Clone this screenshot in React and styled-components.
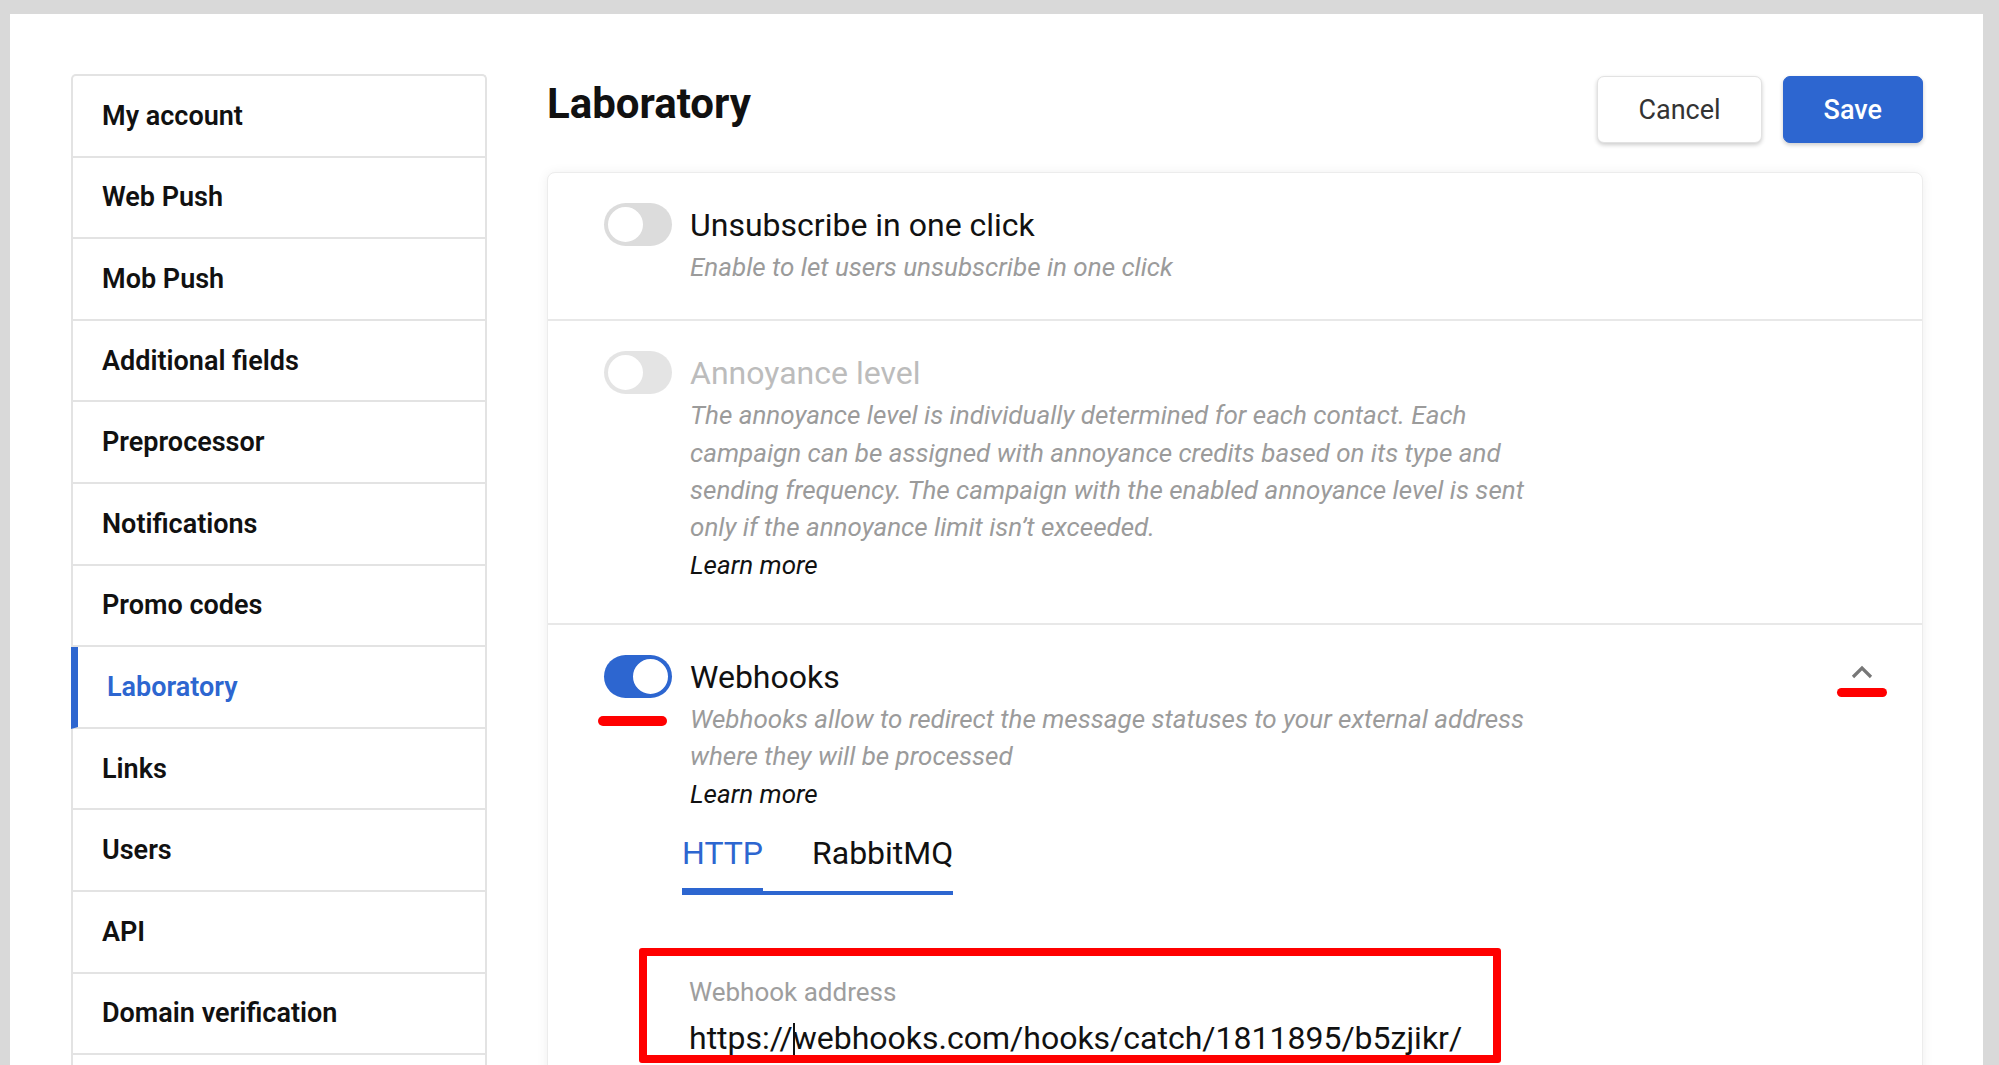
import styled, { createGlobalStyle } from "styled-components";

const GlobalStyle = createGlobalStyle`
    * {
        box-sizing: border-box;
    }
    body {
        margin: 0;
        background: #d9d9d9;
        font-family: Roboto, "Liberation Sans", Arial, sans-serif;
        color: #111;
        overflow: hidden;
    }
`

const menu = [
    'My account', 'Web Push', 'Mob Push', 'Additional fields', 'Preprocessor',
    'Notifications', 'Promo codes', 'Laboratory', 'Links', 'Users', 'API',
    'Domain verification', 'Billing'
]

function Toggle({ on, disabled }) {
    return (
        <Track on={on} disabled={disabled}>
            <Knob on={on} />
        </Track>
    )
}

function Chevron() {
    return (
        <svg width="22" height="14" viewBox="0 0 22 14">
            <polyline points="2,12 11,3 20,12" fill="none" stroke="#777" strokeWidth="3.2" />
        </svg>
    )
}

export default function App() {
    return (
        <>
            <GlobalStyle />
            <Page>
                <Sidebar>
                    {menu.map(item => (
                        <MenuItem key={item} active={item === 'Laboratory'}>{item}</MenuItem>
                    ))}
                </Sidebar>

                <Main>
                    <Header>
                        <Title>Laboratory</Title>
                        <Actions>
                            <Button>Cancel</Button>
                            <Button primary>Save</Button>
                        </Actions>
                    </Header>

                    <Card>
                        <Section>
                            <ToggleCol>
                                <Toggle />
                            </ToggleCol>
                            <Content>
                                <OptionTitle>Unsubscribe in one click</OptionTitle>
                                <Description>Enable to let users unsubscribe in one click</Description>
                            </Content>
                        </Section>

                        <Section>
                            <ToggleCol>
                                <Toggle disabled />
                            </ToggleCol>
                            <Content>
                                <OptionTitle disabled>Annoyance level</OptionTitle>
                                <Description>
                                    The annoyance level is individually determined for each contact. Each campaign can be
                                    assigned with annoyance credits based on its type and sending frequency. The campaign
                                    with the enabled annoyance level is sent only if the annoyance limit isn’t exceeded.
                                </Description>
                                <LearnMore>Learn more</LearnMore>
                            </Content>
                        </Section>

                        <Section>
                            <ToggleCol>
                                <Toggle on />
                                <Mark wide />
                            </ToggleCol>
                            <Content>
                                <OptionTitle>Webhooks</OptionTitle>
                                <Description>
                                    Webhooks allow to redirect the message statuses to your external address where they
                                    will be processed
                                </Description>
                                <LearnMore>Learn more</LearnMore>

                                <Tabs>
                                    <Tab active>HTTP</Tab>
                                    <Tab>RabbitMQ</Tab>
                                </Tabs>

                                <Field>
                                    <FieldLabel>Webhook address</FieldLabel>
                                    <FieldValue>https://<Caret />webhooks.com/hooks/catch/1811895/b5zjikr/</FieldValue>
                                </Field>
                            </Content>
                            <CollapseCol>
                                <Chevron />
                                <Mark />
                            </CollapseCol>
                        </Section>
                    </Card>
                </Main>
            </Page>
        </>
    )
}

const Page = styled.div`
    display: flex;
    align-items: flex-start;
    gap: 60px;
    margin: 14px 16px 0 10px;
    min-height: calc(100vh - 14px);
    padding: 60px 60px 0 61px;
    background: #fff;
`

const Sidebar = styled.nav`
    flex: 0 0 416px;
    border: 2px solid #e3e3e3;
    border-bottom: none;
    border-radius: 5px 5px 0 0;
    background: #fff;
`

const MenuItem = styled.div`
    display: flex;
    align-items: center;
    height: 81.6px;
    padding-left: 29px;
    border-bottom: 2px solid #e3e3e3;
    font-size: 27px;
    font-weight: 600;
    color: ${p => p.active ? '#2d66d0' : '#111'};
    ${p => p.active && `
        margin-left: -2px;
        border-left: 7px solid #2d66d0;
    `}
`

const Main = styled.main`
    flex: 1;
    min-width: 0;
`

const Header = styled.div`
    display: flex;
    justify-content: space-between;
    align-items: flex-start;
    margin-bottom: 29px;
`

const Title = styled.h1`
    margin: 5px 0 0;
    font-size: 42px;
    line-height: 50px;
    font-weight: 700;
`

const Actions = styled.div`
    display: flex;
    gap: 21px;
    margin-top: 2px;
`

const Button = styled.button`
    height: 67px;
    padding: 0 40px;
    border: 1px solid ${p => p.primary ? '#2d66d0' : '#e2e2e2'};
    border-radius: 7px;
    background: ${p => p.primary ? '#2d66d0' : '#fff'};
    color: ${p => p.primary ? '#fff' : '#333'};
    font-family: inherit;
    font-size: 27px;
    font-weight: ${p => p.primary ? 500 : 400};
    box-shadow: 0 2px 4px rgba(0, 0, 0, 0.2);
    cursor: pointer;
`

const Card = styled.div`
    border: 1px solid #ececec;
    border-radius: 8px;
    background: #fff;
    box-shadow: 0 1px 12px rgba(0, 0, 0, 0.07);
    min-height: 1000px;
`

const Section = styled.div`
    display: flex;
    align-items: flex-start;
    gap: 18px;
    padding: 30px 35px 33px 56px;
    border-bottom: 2px solid #e8e8e8;

    & + & {
        padding-top: 30px;
        padding-bottom: 32px;
    }
    &:last-child {
        border-bottom: none;
    }
`

const ToggleCol = styled.div`
    display: flex;
    flex-direction: column;
    flex: 0 0 68px;
`

const Track = styled.div`
    position: relative;
    width: 68px;
    height: 43px;
    border-radius: 22px;
    background: ${p => p.on ? '#2d66d0' : '#dcdcdc'};
    opacity: ${p => p.disabled ? 0.75 : 1};
`

const Knob = styled.span`
    position: absolute;
    top: 2px;
    left: ${p => p.on ? '27px' : '2px'};
    width: 39px;
    height: 39px;
    border-radius: 50%;
    border: 2px solid ${p => p.on ? '#2d66d0' : '#dcdcdc'};
    background: #fff;
`

const Mark = styled.span`
    display: block;
    width: ${p => p.wide ? '69px' : '50px'};
    height: ${p => p.wide ? '10px' : '9px'};
    margin: ${p => p.wide ? '18px 0 0 -6px' : '9px 0 0'};
    border-radius: 5px;
    background: #ff0000;
`

const Content = styled.div`
    flex: 1;
    min-width: 0;
`

const OptionTitle = styled.div`
    margin-top: 1px;
    font-size: 32px;
    line-height: 42px;
    color: ${p => p.disabled ? '#bcbcbc' : '#111'};
`

const Description = styled.p`
    max-width: 860px;
    margin: 3px 0 0;
    font-size: 26px;
    line-height: 37.3px;
    font-style: italic;
    color: #9b9b9b;
`

const LearnMore = styled.a`
    display: block;
    margin: 1px 0 6px;
    font-size: 26px;
    line-height: 37.3px;
    font-style: italic;
    color: #111;
    cursor: pointer;
`

const Tabs = styled.div`
    display: inline-flex;
    gap: 49px;
    margin: 14px 0 0 -8px;
    border-bottom: 4px solid #2d66d0;
`

const Tab = styled.div`
    padding-bottom: 16px;
    border-bottom: 3px solid ${p => p.active ? '#2d66d0' : 'transparent'};
    font-size: 32px;
    line-height: 38px;
    color: ${p => p.active ? '#2d66d0' : '#111'};
    cursor: pointer;
`

const Field = styled.div`
    width: 862px;
    margin: 53px 0 0 -51px;
    padding: 21px 40px 0 42px;
    border: 8px solid #ff0000;
    border-radius: 3px;
`

const FieldLabel = styled.div`
    font-size: 26px;
    line-height: 30px;
    color: #9e9e9e;
`

const FieldValue = styled.div`
    margin-top: 14px;
    font-size: 32px;
    line-height: 34px;
    color: #111;
    white-space: nowrap;
`

const Caret = styled.span`
    display: inline-block;
    width: 2px;
    height: 32px;
    margin-right: -2px;
    vertical-align: -6px;
    background: #111;
`

const CollapseCol = styled.div`
    display: flex;
    flex-direction: column;
    align-items: center;
    width: 50px;
    padding-top: 10px;
    margin-left: auto;
`
